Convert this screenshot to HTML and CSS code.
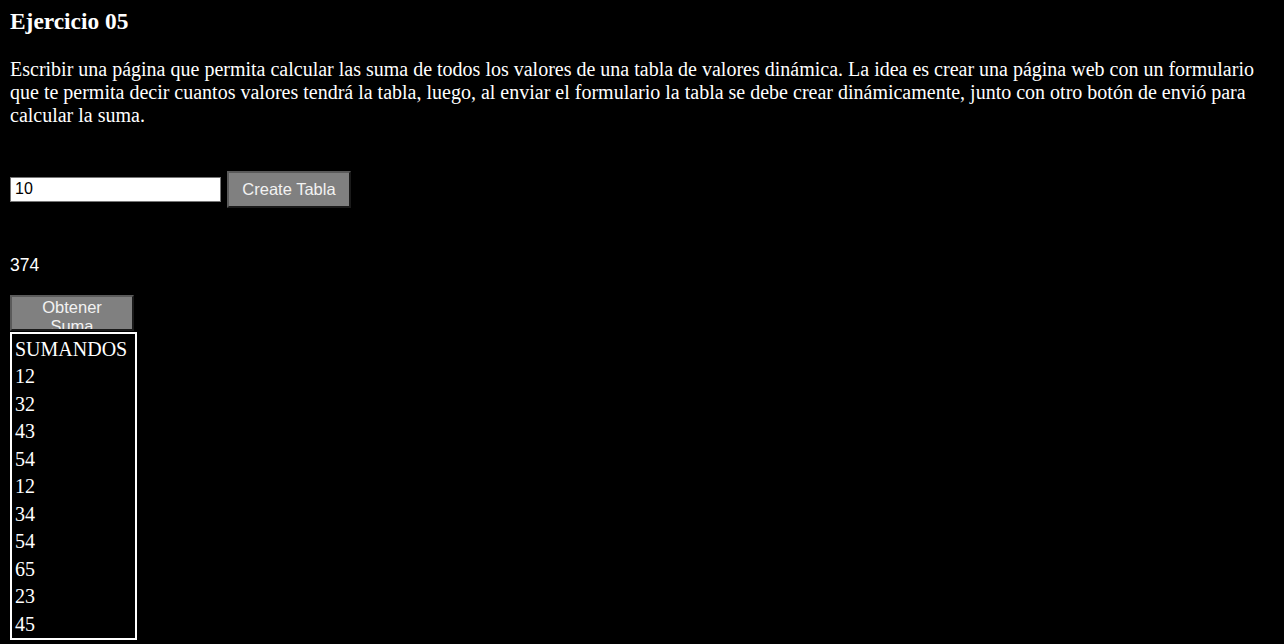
FILE: index.html
```html
<!DOCTYPE html>
<html lang="es">
<head>
<meta charset="utf-8">
<title>Ejercicio 05</title>
<link rel="stylesheet" href="styles.css">
</head>
<body>
<h3 class="title">Ejercicio 05</h3>
<p class="desc">Escribir una página que permita calcular las suma de todos los valores de una tabla de valores dinámica. La idea es crear una página web con un formulario que te permita decir cuantos valores tendrá la tabla, luego, al enviar el formulario la tabla se debe crear dinámicamente, junto con otro botón de envió para calcular la suma.</p>
<form class="create-form">
  <input class="num-input" type="text" value="10">
  <button class="btn btn-create" type="button">Create Tabla</button>
</form>
<div class="result">374</div>
<button class="btn btn-sum" type="button">Obtener Suma</button>
<table class="sum-table">
  <tr><td>SUMANDOS</td></tr>
  <tr><td>12</td></tr>
  <tr><td>32</td></tr>
  <tr><td>43</td></tr>
  <tr><td>54</td></tr>
  <tr><td>12</td></tr>
  <tr><td>34</td></tr>
  <tr><td>54</td></tr>
  <tr><td>65</td></tr>
  <tr><td>23</td></tr>
  <tr><td>45</td></tr>
</table>
</body>
</html>
```
FILE: styles.css
```css
html, body {
  background: #000;
}
body {
  margin: 0;
  padding: 8px 10px;
  color: #fff;
  font-family: "Liberation Serif", "Times New Roman", serif;
  font-size: 20px;
}
.title {
  margin: 0 0 23px;
  font-size: 23.4px;
  font-weight: bold;
  line-height: 27px;
}
.desc {
  margin: 0;
  line-height: 23px;
}
.create-form {
  display: flex;
  align-items: center;
  gap: 6px;
  margin: 43.6px 0 0;
}
.num-input {
  box-sizing: border-box;
  width: 211px;
  height: 25px;
  margin: 0;
  padding: 1px 4px;
  border: 1px solid #767676;
  background: #fff;
  color: #000;
  font-family: "Liberation Sans", Arial, sans-serif;
  font-size: 16px;
  outline: none;
}
.btn {
  box-sizing: border-box;
  margin: 0;
  background: #808080;
  color: #f2f2f2;
  font-family: "Liberation Sans", Arial, sans-serif;
  font-size: 16.5px;
  border: 2px solid;
  border-color: #5a5a5a #1a1a1a #1a1a1a #5a5a5a;
  cursor: pointer;
}
.btn-create {
  width: 124px;
  height: 37px;
  padding: 0 6px;
}
.result {
  margin-top: 47px;
  font-family: "Liberation Sans", Arial, sans-serif;
  font-size: 17.5px;
  line-height: 20px;
}
.btn-sum {
  display: block;
  width: 124px;
  height: 36px;
  margin-top: 20px;
  padding: 1px 12px 0;
  font-size: 16.5px;
  line-height: 19.5px;
  text-align: center;
  overflow: hidden;
}
.sum-table {
  width: 127px;
  margin-top: 1px;
  border: 2px solid #fff;
  border-spacing: 2px;
  color: #fff;
  font-size: 20px;
}
.sum-table td {
  padding: 2px 1px 0;
  line-height: 23.5px;
  text-align: left;
}
```
